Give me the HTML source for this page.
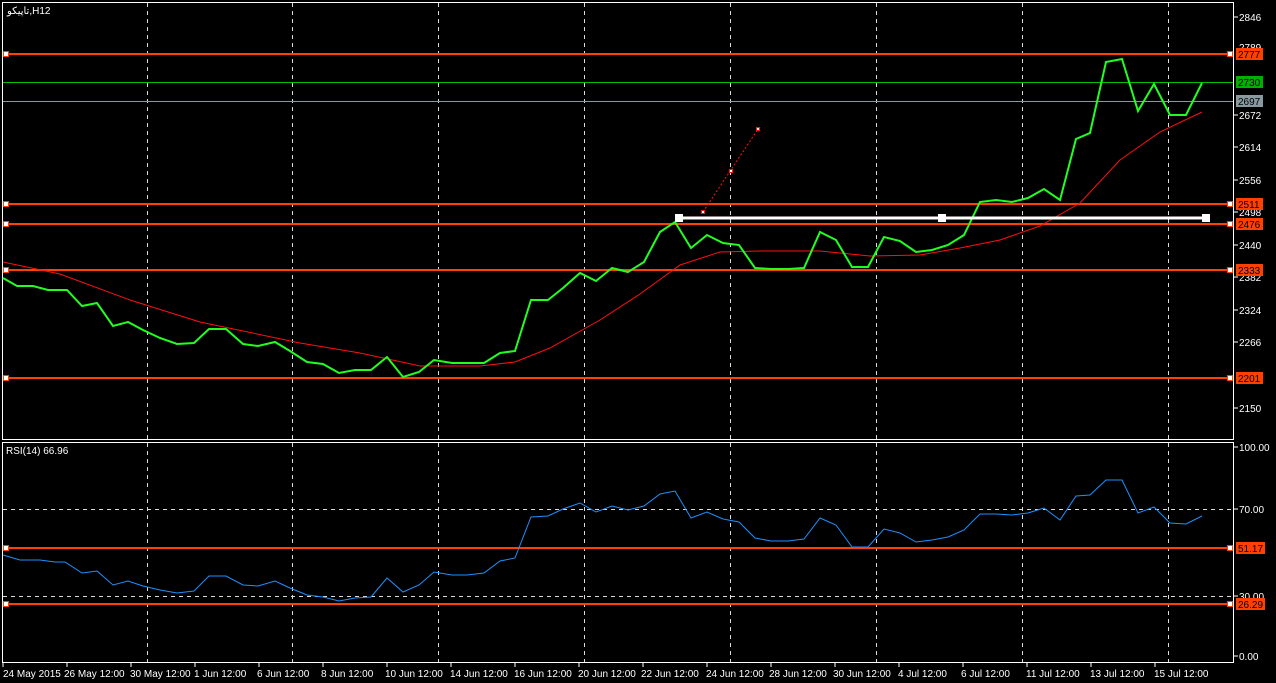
<!DOCTYPE html><html><head><style>body{margin:0;background:#000;width:1276px;height:683px;overflow:hidden}svg{display:block}text{font-family:"Liberation Sans",sans-serif;font-size:10px;fill:#fff}</style></head><body>
<svg width="1276" height="683" viewBox="0 0 1276 683">
<rect width="1276" height="683" fill="#000"/>
<g stroke="#fff" fill="none" stroke-width="1">
<rect x="2.5" y="2.5" width="1231" height="437"/>
<rect x="2.5" y="442.5" width="1231" height="220"/>
</g>
<g stroke="#ddd" stroke-dasharray="4,4" stroke-width="1">
<line x1="147.5" y1="3" x2="147.5" y2="662"/><line x1="292.5" y1="3" x2="292.5" y2="662"/><line x1="438.5" y1="3" x2="438.5" y2="662"/><line x1="584.5" y1="3" x2="584.5" y2="662"/><line x1="730.5" y1="3" x2="730.5" y2="662"/><line x1="876.5" y1="3" x2="876.5" y2="662"/><line x1="1022.5" y1="3" x2="1022.5" y2="662"/><line x1="1168.5" y1="3" x2="1168.5" y2="662"/>
<line x1="3" y1="509.5" x2="1233" y2="509.5"/><line x1="3" y1="596.5" x2="1233" y2="596.5"/>
</g>
<line x1="3" y1="82.5" x2="1233" y2="82.5" stroke="#00c000"/>
<line x1="3" y1="101.5" x2="1233" y2="101.5" stroke="#8899a0"/>
<g stroke="#ff4000" stroke-width="2">
<line x1="3" y1="54" x2="1233" y2="54"/><line x1="3" y1="204" x2="1233" y2="204"/><line x1="3" y1="224" x2="1233" y2="224"/><line x1="3" y1="270" x2="1233" y2="270"/><line x1="3" y1="378" x2="1233" y2="378"/><line x1="3" y1="548" x2="1233" y2="548"/><line x1="3" y1="604" x2="1233" y2="604"/>
</g>
<g fill="#fff" stroke="#ff4000" stroke-width="1">
<rect x="3.5" y="51.5" width="5" height="5"/><rect x="1227.5" y="51.5" width="5" height="5"/>
<rect x="3.5" y="201.5" width="5" height="5"/><rect x="1227.5" y="201.5" width="5" height="5"/>
<rect x="3.5" y="221.5" width="5" height="5"/><rect x="1227.5" y="221.5" width="5" height="5"/>
<rect x="3.5" y="267.5" width="5" height="5"/><rect x="1227.5" y="267.5" width="5" height="5"/>
<rect x="3.5" y="375.5" width="5" height="5"/><rect x="1227.5" y="375.5" width="5" height="5"/>
<rect x="3.5" y="545.5" width="5" height="5"/><rect x="1227.5" y="545.5" width="5" height="5"/>
<rect x="3.5" y="601.5" width="5" height="5"/><rect x="1227.5" y="601.5" width="5" height="5"/>
</g>
<polyline fill="none" stroke="#ff1010" stroke-width="1" points="3,262 60,274 130,300 200,322 300,343 360,353 420,366 480,366 515,362 550,348 600,320 640,294 680,265 720,252 760,251 820,251 870,256 920,255 960,248 1000,240 1040,226 1080,203 1120,160 1160,132 1202,112"/>
<polyline fill="none" stroke="#20ff20" stroke-width="2" points="3,278 17,286 33,286 48,290 67,290 82,306 97,303 113,326 128,322 143,330 160,338 177,344 194,343 209,329 226,329 243,344 258,346 275,342 290,351 307,362 323,364 339,373 355,370 371,370 387,357 403,377 419,372 434,360 452,363 467,363 484,363 500,353 515,351 531,300 548,300 563,288 580,273 596,281 612,268 628,272 644,262 660,232 675,222 691,248 707,235 723,243 739,245 755,268 771,269 788,269 804,268 820,232 836,240 852,267 868,267 884,237 900,241 916,252 932,250 948,245 964,235 980,202 996,200 1012,202 1028,198 1044,189 1060,200 1076,139 1090,133 1106,62 1122,59 1138,111 1154,84 1170,115 1186,115 1202,83"/>
<line x1="679" y1="218" x2="1206" y2="218" stroke="#fff" stroke-width="3"/>
<g fill="#fff"><rect x="675" y="214" width="8" height="8"/><rect x="938" y="214" width="8" height="8"/><rect x="1202" y="214" width="8" height="8"/></g>
<line x1="703" y1="212" x2="758" y2="129" stroke="#ff1010" stroke-dasharray="2,2"/>
<g fill="#fff" stroke="#ff1010"><rect x="701.5" y="210.5" width="3" height="3"/><rect x="729.5" y="169.5" width="3" height="3"/><rect x="756.5" y="127.5" width="3" height="3"/></g>
<polyline fill="none" stroke="#1e90ff" stroke-width="1" points="3,555 20,560 40,560 55,562 65,562 82,573 97,571 113,585 128,581 143,586 160,590 177,593 194,591 209,576 226,576 243,585 258,586 275,581 290,588 307,595 323,597 339,601 355,598 371,597 387,578 403,592 419,585 434,572 452,575 467,575 484,573 500,561 515,558 531,517 548,516 563,509 580,503 596,512 612,506 628,510 644,506 660,494 675,491 691,518 707,512 723,519 739,522 755,538 771,541 788,541 804,539 820,518 836,525 852,547 868,547 884,529 900,533 916,542 932,540 948,537 964,530 980,514 996,514 1012,515 1028,513 1044,508 1060,520 1076,496 1090,495 1106,480 1122,480 1138,513 1154,507 1170,523 1186,524 1202,516"/>
<text x="7" y="14" style="font-family:'Liberation Sans','Noto Sans CJK SC',sans-serif">تاپیکو,H12</text>
<text x="6" y="454">RSI(14) 66.96</text>
<g stroke="#fff"><line x1="1234" y1="17" x2="1238" y2="17"/><line x1="1234" y1="115" x2="1238" y2="115"/><line x1="1234" y1="147" x2="1238" y2="147"/><line x1="1234" y1="180" x2="1238" y2="180"/><line x1="1234" y1="212" x2="1238" y2="212"/><line x1="1234" y1="245" x2="1238" y2="245"/><line x1="1234" y1="277" x2="1238" y2="277"/><line x1="1234" y1="310" x2="1238" y2="310"/><line x1="1234" y1="342" x2="1238" y2="342"/><line x1="1234" y1="408" x2="1238" y2="408"/><line x1="1234" y1="447" x2="1238" y2="447"/><line x1="1234" y1="509" x2="1238" y2="509"/><line x1="1234" y1="596" x2="1238" y2="596"/><line x1="1234" y1="656" x2="1238" y2="656"/></g>
<text x="1239" y="21">2846</text><text x="1239" y="51">2789</text><text x="1239" y="119">2672</text><text x="1239" y="151">2614</text><text x="1239" y="184">2556</text><text x="1239" y="216">2498</text><text x="1239" y="249">2440</text><text x="1239" y="281">2382</text><text x="1239" y="314">2324</text><text x="1239" y="346">2266</text><text x="1239" y="412">2150</text>
<text x="1239" y="451">100.00</text><text x="1239" y="513">70.00</text><text x="1239" y="600">30.00</text><text x="1239" y="660">0.00</text>
<rect x="1236" y="48" width="27" height="12" fill="#ff4000"/><text x="1238" y="58" style="fill:#000">2777</text>
<rect x="1236" y="76" width="27" height="12" fill="#00b000"/><text x="1238" y="86" style="fill:#000">2730</text>
<rect x="1236" y="95" width="27" height="12" fill="#8899a0"/><text x="1238" y="105" style="fill:#000">2697</text>
<rect x="1236" y="198" width="27" height="12" fill="#ff4000"/><text x="1238" y="208" style="fill:#000">2511</text>
<rect x="1236" y="218" width="27" height="12" fill="#ff4000"/><text x="1238" y="228" style="fill:#000">2476</text>
<rect x="1236" y="264" width="27" height="12" fill="#ff4000"/><text x="1238" y="274" style="fill:#000">2333</text>
<rect x="1236" y="372" width="27" height="12" fill="#ff4000"/><text x="1238" y="382" style="fill:#000">2201</text>
<rect x="1236" y="542" width="29" height="12" fill="#ff4000"/><text x="1238" y="552" style="fill:#000">51.17</text>
<rect x="1236" y="598" width="29" height="12" fill="#ff4000"/><text x="1238" y="608" style="fill:#000">26.29</text>
<g stroke="#fff"><line x1="3" y1="663" x2="3" y2="667"/><line x1="67" y1="663" x2="67" y2="667"/><line x1="131" y1="663" x2="131" y2="667"/><line x1="195" y1="663" x2="195" y2="667"/><line x1="259" y1="663" x2="259" y2="667"/><line x1="323" y1="663" x2="323" y2="667"/><line x1="387" y1="663" x2="387" y2="667"/><line x1="451" y1="663" x2="451" y2="667"/><line x1="515" y1="663" x2="515" y2="667"/><line x1="579" y1="663" x2="579" y2="667"/><line x1="643" y1="663" x2="643" y2="667"/><line x1="707" y1="663" x2="707" y2="667"/><line x1="771" y1="663" x2="771" y2="667"/><line x1="835" y1="663" x2="835" y2="667"/><line x1="899" y1="663" x2="899" y2="667"/><line x1="963" y1="663" x2="963" y2="667"/><line x1="1027" y1="663" x2="1027" y2="667"/><line x1="1091" y1="663" x2="1091" y2="667"/><line x1="1155" y1="663" x2="1155" y2="667"/></g>
<g><text x="3" y="677">24 May 2015</text><text x="64" y="677">26 May 12:00</text><text x="130" y="677">30 May 12:00</text><text x="194" y="677">1 Jun 12:00</text><text x="257" y="677">6 Jun 12:00</text><text x="321" y="677">8 Jun 12:00</text><text x="385" y="677">10 Jun 12:00</text><text x="450" y="677">14 Jun 12:00</text><text x="514" y="677">16 Jun 12:00</text><text x="578" y="677">20 Jun 12:00</text><text x="641" y="677">22 Jun 12:00</text><text x="706" y="677">24 Jun 12:00</text><text x="769" y="677">28 Jun 12:00</text><text x="833" y="677">30 Jun 12:00</text><text x="898" y="677">4 Jul 12:00</text><text x="961" y="677">6 Jul 12:00</text><text x="1026" y="677">11 Jul 12:00</text><text x="1090" y="677">13 Jul 12:00</text><text x="1154" y="677">15 Jul 12:00</text></g>
</svg></body></html>
